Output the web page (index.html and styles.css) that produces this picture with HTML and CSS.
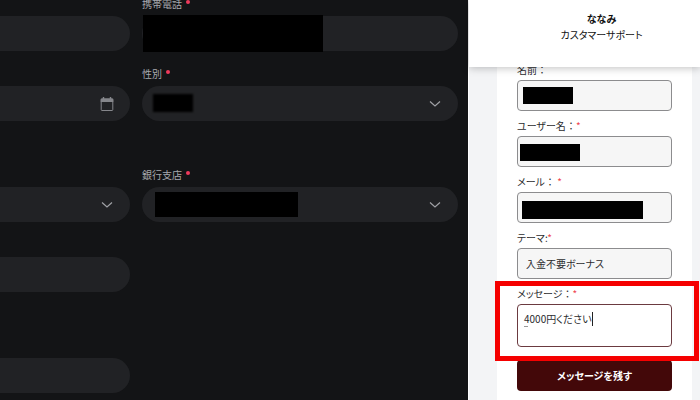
FILE: index.html
```html
<!DOCTYPE html>
<html lang="ja">
<head>
<meta charset="utf-8">
<meta name="viewport" content="width=device-width, initial-scale=1">
<title>カスタマーサポート</title>
<link rel="stylesheet" href="styles.css">
</head>
<body>
<div class="page">
  <main class="profile">
    <form class="profile-form">
      <section class="group">
        <div class="field side">
          <div class="control"><input class="pill" type="text" aria-label="国番号"></div>
        </div>
        <div class="field">
          <label for="phone">携帯電話<span class="dot"></span></label>
          <div class="control"><input class="pill" id="phone" type="tel"><span class="mask mask-phone"></span></div>
        </div>
        <div class="field side">
          <div class="control">
            <input class="pill" type="text" aria-label="生年月日">
            <svg class="calendar" viewBox="0 0 14 16" aria-hidden="true"><path d="M3.5 1v3M10.5 1v3" stroke="currentColor" stroke-width="1.4"/><path d="M1.5 2.5h11a.8.8 0 0 1 .8.8V6H.7V3.300a.8.8 0 0 1 .8-.8z" fill="currentColor"/><rect x="1.200" y="3" width="11.600" height="11.500" rx=".8" fill="none" stroke="currentColor"/></svg>
          </div>
        </div>
        <div class="field">
          <label for="gender">性別<span class="dot"></span></label>
          <div class="control">
            <select class="pill" id="gender"><option></option></select>
            <span class="mask mask-gender"></span>
            <svg class="chevron" viewBox="0 0 12 8" aria-hidden="true"><path d="M1 1.500l5 4.500 5-4.500"/></svg>
          </div>
        </div>
      </section>
      <section class="group">
        <div class="field side">
          <div class="control">
            <select class="pill" aria-label="銀行名"><option></option></select>
            <svg class="chevron" viewBox="0 0 12 8" aria-hidden="true"><path d="M1 1.500l5 4.500 5-4.500"/></svg>
          </div>
        </div>
        <div class="field">
          <label for="branch">銀行支店<span class="dot"></span></label>
          <div class="control">
            <select class="pill" id="branch"><option></option></select>
            <span class="mask mask-branch"></span>
            <svg class="chevron" viewBox="0 0 12 8" aria-hidden="true"><path d="M1 1.500l5 4.500 5-4.500"/></svg>
          </div>
        </div>
        <div class="field side">
          <div class="control"><input class="pill" type="text" aria-label="口座番号"></div>
        </div>
      </section>
      <section class="group">
        <div class="field side">
          <div class="control"><input class="pill" type="text" aria-label="住所"></div>
        </div>
      </section>
    </form>
  </main>
  <aside class="chat">
    <header class="chat-head">
      <strong>ななみ</strong>
      <span>カスタマーサポート</span>
    </header>
    <form class="card">
      <div class="item">
        <label for="name">名前<span class="colon">：</span></label>
        <div class="control"><input class="box" id="name" type="text"><span class="mask mask-name"></span></div>
      </div>
      <div class="item">
        <label for="user">ユーザー名<span class="colon">：</span><span class="star">*</span></label>
        <div class="control"><input class="box" id="user" type="text"><span class="mask mask-user"></span></div>
      </div>
      <div class="item">
        <label for="mail">メール<span class="colon">：</span> <span class="star">*</span></label>
        <div class="control"><input class="box" id="mail" type="email"><span class="mask mask-mail"></span></div>
      </div>
      <div class="item">
        <label for="theme">テーマ:<span class="star">*</span></label>
        <div class="control"><input class="box" id="theme" type="text" value="入金不要ボーナス"></div>
      </div>
      <div class="item message">
        <label for="message">メッセージ<span class="colon">：</span><span class="star">*</span></label>
        <div class="control"><textarea class="box area" id="message">4000円ください</textarea><span class="caret"></span><span class="compose"></span></div>
        <span class="highlight"></span>
      </div>
      <button class="send" type="button">メッセージを残す</button>
    </form>
  </aside>
</div>
</body>
</html>
```

FILE: styles.css
```css
* { box-sizing: border-box; }

body {
  margin: 0;
  font-family: "Noto Sans CJK JP", sans-serif;
  font-feature-settings: "palt";
  font-size: 10px;
  line-height: 16px;
}

input, select, textarea, button {
  margin: 0;
  font: inherit;
  font-feature-settings: inherit;
  color: inherit;
}

.page {
  display: flex;
  height: 100vh;
  overflow: hidden;
}

.control { position: relative; }

.control > * { display: block; }

.mask {
  position: absolute;
  background: #000;
}

/* Profile form: the first column runs off the left edge */
.profile {
  flex: 1;
  min-width: 0;
  overflow: hidden;
  background: #131416;
  color: #a8a9ae;
}

.profile-form {
  display: flex;
  flex-direction: column;
  gap: 45px;
  margin: -5px 10px 0 -186px;
}

.group {
  display: grid;
  grid-template-columns: 1fr 1fr;
  gap: 14px 12px;
}

.field {
  display: flex;
  flex-direction: column;
  justify-content: flex-end;
  gap: 4px;
  height: 56px;
}

.field label {
  display: flex;
  gap: 4px;
  line-height: 17px;
}

.dot {
  width: 4px;
  height: 4px;
  margin-top: 5px;
  border-radius: 50%;
  background: #f03a5c;
}

.pill {
  width: 100%;
  height: 35px;
  padding: 0 16px;
  border: 0;
  border-radius: 18px;
  background: #212225;
  appearance: none;
  outline: none;
}

.chevron, .calendar {
  position: absolute;
  top: 14px;
  right: 17px;
  width: 12px;
  height: 8px;
  pointer-events: none;
}

.chevron path {
  fill: none;
  stroke: #a0a1a6;
  stroke-width: 1.2;
}

.calendar {
  top: 10px;
  right: 16px;
  width: 14px;
  height: 16px;
  color: #85868b;
}

.mask-phone { top: -1px; left: 1px; width: 180px; height: 37px; }
.mask-gender { top: 8px; left: 11px; width: 40px; height: 18px; filter: blur(1px); }
.mask-branch { top: 5px; left: 13px; width: 143px; height: 25px; }

/* Support chat */
.chat {
  flex: none;
  display: flex;
  flex-direction: column;
  width: 232px;
  border-left: 1px solid #fff;
  background: #f3f4f6;
  color: #2c2c2e;
}

.chat-head {
  position: relative;
  z-index: 1;
  display: flex;
  flex-direction: column;
  align-items: center;
  height: 67px;
  padding: 11px 0 0 34px;
  background: #fff;
  box-shadow: 0 1px 8px rgba(0, 0, 0, 0.25);
  color: #111;
}

.chat-head strong { font-weight: 700; }

.card {
  flex: 1;
  margin: -12px 8px 0 28px;
  padding: 0 20px;
  background: #fff;
}

.item label {
  display: block;
  height: 25px;
  padding-top: 7px;
}

.colon { font-feature-settings: normal; }

.star { color: #f0454f; }

.box {
  width: 100%;
  height: 31px;
  padding: 0 8px;
  border: 1px solid #8c8c8e;
  border-radius: 4px;
  background: #f6f6f6;
  outline: none;
}

.area {
  height: 43px;
  padding: 6px;
  border-color: #6b3a40;
  background: #fff;
  resize: none;
  overflow: hidden;
}

.mask-name { top: 7px; left: 6px; width: 50px; height: 17px; }
.mask-user { top: 8px; left: 3px; width: 60px; height: 17px; }
.mask-mail { top: 9px; left: 5px; width: 121px; height: 18px; }

.caret {
  position: absolute;
  top: 8px;
  left: 75px;
  width: 1px;
  height: 14px;
  background: #222;
}

.compose {
  position: absolute;
  top: 22px;
  left: 7px;
  width: 4px;
  height: 1px;
  background: #999;
}

.message { position: relative; }

.highlight {
  position: absolute;
  inset: 2px -27px -14px -22px;
  border: 5px solid #f50000;
  pointer-events: none;
}

.send {
  display: block;
  width: 100%;
  height: 31px;
  margin-top: 13px;
  padding: 0;
  border: 0;
  border-radius: 4px;
  background: #430809;
  color: #fff;
  font-weight: 700;
}
```
